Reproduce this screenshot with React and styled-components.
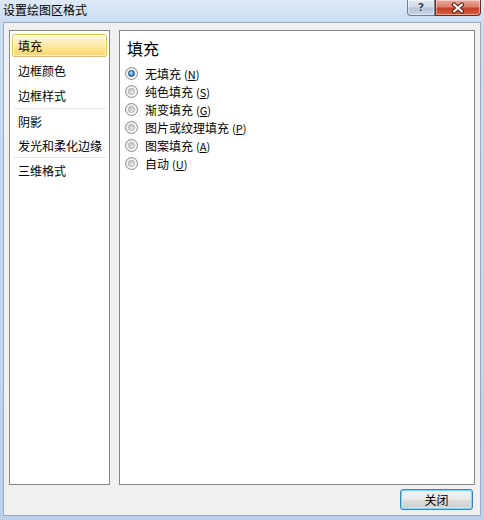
import React from "react";
import styled, { createGlobalStyle } from "styled-components";

const Global = createGlobalStyle`
  html, body { margin: 0; padding: 0; }
  body { font-family: "Noto Sans CJK SC", "Noto Sans", sans-serif; font-size: 12px; color: #000; }
`;

const Window = styled.div`
  width: 484px;
  height: 520px;
  display: flex;
  flex-direction: column;
  box-sizing: border-box;
  background: linear-gradient(to bottom, #dde9f7 0px, #cbdcf0 22px, #c4d7ed 200px, #bcd1ea 520px);
  overflow: hidden;
`;

const TitleBar = styled.div`
  height: 22px;
  display: flex;
  align-items: flex-start;
  flex: none;
`;

const Title = styled.div`
  padding-left: 3px;
  line-height: 20px;
  font-size: 12px;
  color: #000;
`;

const Controls = styled.div`
  margin-left: auto;
  margin-right: 3px;
  display: flex;
`;

const CaptionButton = styled.div`
  box-sizing: border-box;
  height: 16px;
  width: ${(p) => p.$w}px;
  display: flex;
  align-items: center;
  justify-content: center;
  border: 1px solid ${(p) => (p.$danger ? "#6e2a20" : "#6d7f95")};
  border-top: none;
  border-radius: ${(p) => (p.$danger ? "0 0 4px 0" : "0 0 0 4px")};
  background: ${(p) =>
    p.$danger
      ? "linear-gradient(to bottom, #e9a99b 0%, #dc7e6c 45%, #c8402a 55%, #d0623f 100%)"
      : "linear-gradient(to bottom, #e3e9f1 0%, #cfd9e6 45%, #b7c5d8 55%, #c8d5e5 100%)"};
  box-shadow: inset 0 0 0 1px rgba(255, 255, 255, 0.45);
`;

const HelpGlyph = styled.span`
  font-family: "DejaVu Sans", sans-serif;
  font-weight: bold;
  font-size: 11px;
  line-height: 14px;
  color: #2c3d58;
  text-shadow: 0 0 2px #fff, 0 0 1px #fff;
`;

const Body = styled.div`
  flex: 1;
  margin: 0 3px 4px 3px;
  border: 1px solid #9aabbf;
  background: #f0f0f0;
  display: flex;
  flex-direction: column;
  padding: 7px 5px 5px 5px;
  min-height: 0;
`;

const Main = styled.div`
  flex: 1;
  display: flex;
  gap: 9px;
  min-height: 0;
`;

const Panel = styled.div`
  box-sizing: border-box;
  border: 1px solid #828790;
  background: #fff;
  width: ${(p) => p.$w}px;
  flex: none;
  display: flex;
  flex-direction: column;
`;

const NavList = styled.div`
  display: flex;
  flex-direction: column;
  padding: 2px 2px 0 2px;
`;

const NavItem = styled.div`
  height: ${(p) => p.$h}px;
  box-sizing: border-box;
  display: flex;
  align-items: center;
  padding-left: ${(p) => (p.$active ? "5px" : "6px")};
  white-space: nowrap;
  ${(p) =>
    p.$active
      ? `
    margin: 1px 0;
    height: ${p.$h - 2}px;
    border: 1px solid #e2c06a;
    border-radius: 2px;
    background: linear-gradient(to bottom, #fff8dc 0%, #fdeeb4 40%, #fcde86 75%, #fbd66f 100%);
    box-shadow: inset 0 0 0 1px rgba(255,255,255,0.6);
  `
      : ""}
`;

const NavSeparator = styled.div`
  height: 1px;
  margin: 0 1px;
  background: #e6e6e6;
`;

const Content = styled.div`
  padding: 7px 0 0 5px;
  display: flex;
  flex-direction: column;
`;

const Heading = styled.div`
  font-size: 16px;
  line-height: 20px;
  padding-left: 2px;
  margin-bottom: 6px;
`;

const RadioRow = styled.label`
  height: 18px;
  display: flex;
  align-items: center;
  gap: 7px;
  white-space: nowrap;
`;

const RadioCircle = styled.span`
  width: 13px;
  height: 13px;
  box-sizing: border-box;
  border-radius: 50%;
  border: 1px solid #8a8a8a;
  background: linear-gradient(135deg, #e6e6e6, #fbfbfb);
  display: flex;
  align-items: center;
  justify-content: center;
  flex: none;
  &::after {
    content: "";
    width: 7px;
    height: 7px;
    border-radius: 50%;
    box-sizing: border-box;
    background: ${(p) =>
      p.$checked
        ? "radial-gradient(circle at 40% 35%, #c6ecff 0%, #4aa3de 45%, #1b5a98 100%)"
        : "linear-gradient(135deg, #bdbdbd 0%, #d9d9d9 50%, #f0f0f0 100%)"};
    border: 1px solid ${(p) => (p.$checked ? "#1f4d7d" : "#ababab")};
  }
`;

const Key = styled.span`
  margin-left: 3px;
  font-size: 11px;
  u { text-decoration: underline; }
`;

const Footer = styled.div`
  flex: none;
  display: flex;
  justify-content: flex-end;
  padding: 4px 2px 0 0;
`;

const Button = styled.button`
  width: 73px;
  height: 21px;
  box-sizing: border-box;
  border: 1px solid #3c7fb1;
  border-radius: 3px;
  font-family: "Noto Sans CJK SC", sans-serif;
  font-size: 12px;
  line-height: 17px;
  color: #000;
  padding: 0;
  background: linear-gradient(to bottom, #f2f2f2 0%, #ebebeb 49%, #dddddd 51%, #cfcfcf 100%);
  box-shadow: inset 0 0 0 1px #7fd8f5, inset 0 0 0 2px rgba(200, 238, 252, 0.7);
`;

const fills = [
  { label: "无填充", key: "N", checked: true },
  { label: "纯色填充", key: "S" },
  { label: "渐变填充", key: "G" },
  { label: "图片或纹理填充", key: "P" },
  { label: "图案填充", key: "A" },
  { label: "自动", key: "U" },
];

const nav = [
  { h: 25, items: ["填充", "边框颜色", "边框样式"] },
  { h: 24, items: ["阴影", "发光和柔化边缘"] },
  { h: 24, items: ["三维格式"] },
];

export default function App() {
  return (
    <>
      <Global />
      <Window>
        <TitleBar>
          <Title>设置绘图区格式</Title>
          <Controls>
            <CaptionButton $w={28}>
              <HelpGlyph>?</HelpGlyph>
            </CaptionButton>
            <CaptionButton $w={46} $danger>
              <svg width="14" height="12" viewBox="-7 -6 14 12">
                <path d="M-4 -3.5 L4 3.5 M4 -3.5 L-4 3.5" stroke="#4a1d15" strokeWidth="4.2" strokeLinecap="round" />
                <path d="M-4 -3.5 L4 3.5 M4 -3.5 L-4 3.5" stroke="#fff" strokeWidth="2.2" strokeLinecap="round" />
              </svg>
            </CaptionButton>
          </Controls>
        </TitleBar>
        <Body>
          <Main>
            <Panel $w={101}>
              <NavList>
                {nav.map((group, gi) => (
                  <React.Fragment key={gi}>
                    {gi > 0 && <NavSeparator />}
                    {group.items.map((item) => (
                      <NavItem key={item} $h={group.h} $active={item === "填充"}>
                        {item}
                      </NavItem>
                    ))}
                  </React.Fragment>
                ))}
              </NavList>
            </Panel>
            <Panel $w={356}>
              <Content>
                <Heading>填充</Heading>
                {fills.map((f) => (
                  <RadioRow key={f.key}>
                    <RadioCircle $checked={f.checked} />
                    <span>
                      {f.label}
                      <Key>
                        (<u>{f.key}</u>)
                      </Key>
                    </span>
                  </RadioRow>
                ))}
              </Content>
            </Panel>
          </Main>
          <Footer>
            <Button>关闭</Button>
          </Footer>
        </Body>
      </Window>
    </>
  );
}
